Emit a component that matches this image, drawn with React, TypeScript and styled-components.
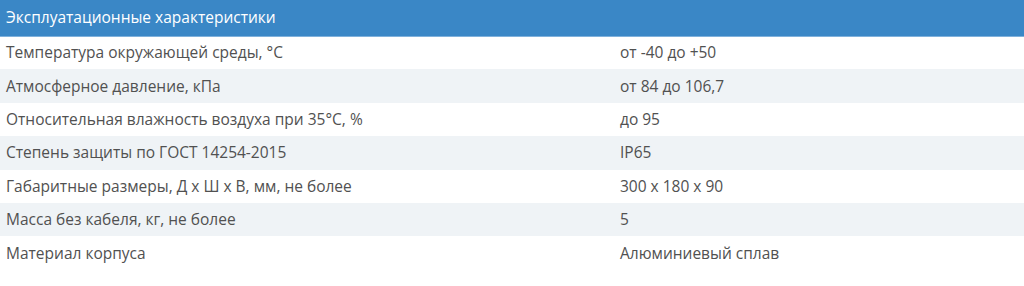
import React from "react";
import styled, { createGlobalStyle } from "styled-components";

const GlobalStyle = createGlobalStyle`
  html, body { margin: 0; padding: 0; background: #ffffff; }
  body { font-family: "Open Sans", "Noto Sans", sans-serif; }
`;

const Table = styled.table`
  width: 1024px;
  border-collapse: collapse;
  table-layout: fixed;
  font-family: "Open Sans", "Noto Sans", sans-serif;
  font-size: 15.5px;
`;

const HeadCell = styled.th`
  background: #3a87c6;
  color: #ffffff;
  font-weight: 400;
  text-align: left;
  height: 36px;
  padding: 0 6px;
  box-sizing: border-box;
  border-bottom: 1px solid #7fb1dc;
  line-height: 17px;
`;

const Row = styled.tr<{ $striped: boolean }>`
  background: ${(p) => (p.$striped ? "#eff3f6" : "#ffffff")};
`;

const Cell = styled.td`
  color: #515151;
  padding: 0 6px;
  height: 33.4px;
  box-sizing: border-box;
  line-height: 17px;
  vertical-align: middle;
`;

const rows: [string, string][] = [
  ["Температура окружающей среды, °C", "от -40 до +50"],
  ["Атмосферное давление, кПа", "от 84 до 106,7"],
  ["Относительная влажность воздуха при 35°C, %", "до 95"],
  ["Степень защиты по ГОСТ 14254-2015", "IP65"],
  ["Габаритные размеры, Д x Ш x В, мм, не более", "300 x 180 x 90"],
  ["Масса без кабеля, кг, не более", "5"],
  ["Материал корпуса", "Алюминиевый сплав"],
];

export default function App() {
  return (
    <>
      <GlobalStyle />
      <Table>
        <colgroup>
          <col style={{ width: "614px" }} />
          <col />
        </colgroup>
        <thead>
          <tr>
            <HeadCell colSpan={2}>Эксплуатационные характеристики</HeadCell>
          </tr>
        </thead>
        <tbody>
          {rows.map(([k, v], i) => (
            <Row key={k} $striped={i % 2 === 1}>
              <Cell>{k}</Cell>
              <Cell>{v}</Cell>
            </Row>
          ))}
        </tbody>
      </Table>
    </>
  );
}
